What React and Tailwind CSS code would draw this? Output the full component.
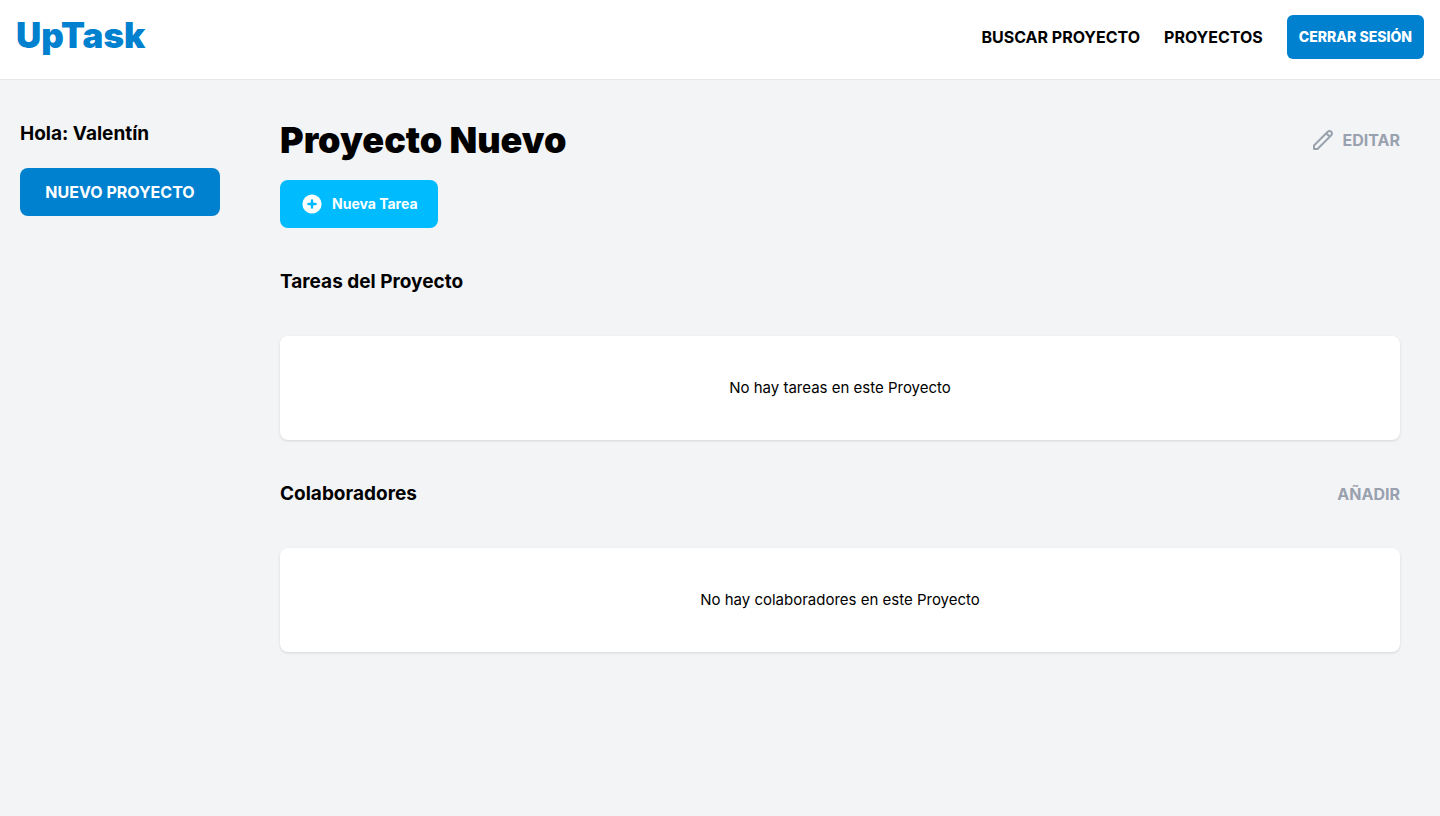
function PencilIcon() {
  return (
    <svg xmlns="http://www.w3.org/2000/svg" className="h-6 w-6" fill="none" viewBox="0 0 24 24" stroke="currentColor" strokeWidth={2} aria-hidden="true">
      <path strokeLinecap="round" strokeLinejoin="round" d="M15.232 5.232l3.536 3.536m-2.036-5.036a2.5 2.5 0 113.536 3.536L6.5 21.036H3v-3.572L16.732 3.732z" />
    </svg>
  );
}

function PlusIcon() {
  return (
    <svg xmlns="http://www.w3.org/2000/svg" className="h-6 w-6" viewBox="0 0 20 20" fill="currentColor" aria-hidden="true">
      <path fillRule="evenodd" clipRule="evenodd" d="M10 18a8 8 0 100-16 8 8 0 000 16zm1-11a1 1 0 10-2 0v2H7a1 1 0 100 2h2v2a1 1 0 102 0v-2h2a1 1 0 100-2h-2V7z" />
    </svg>
  );
}

function Header() {
  return (
    <header className="border-b border-gray-200 bg-white px-4 pt-[15px] pb-5">
      <div className="flex items-start justify-between">
        <h2 className="text-[35px] leading-10 font-black text-[#0081cf]">UpTask</h2>
        <nav className="flex items-center gap-6">
          <button type="button" className="font-bold uppercase">Buscar Proyecto</button>
          <a href="#proyectos" className="font-bold uppercase">Proyectos</a>
          <button type="button" className="rounded-md bg-[#0081cf] p-3 text-sm font-extrabold text-white uppercase">Cerrar Sesión</button>
        </nav>
      </div>
    </header>
  );
}

function Sidebar() {
  return (
    <aside className="w-60 shrink-0 px-5 py-10">
      <p className="text-[19px] leading-7 font-bold">Hola: Valentín</p>
      <a href="#crear-proyecto" className="mt-5 block w-full rounded-lg bg-[#0081cf] p-3 text-center font-bold text-white uppercase">Nuevo Proyecto</a>
    </aside>
  );
}

function EmptyCard({ children }) {
  return (
    <div className="mt-10 rounded-lg bg-white shadow">
      <p className="p-10 text-center text-[15px] leading-6">{children}</p>
    </div>
  );
}

export default function App() {
  return (
    <div className="min-h-screen bg-gray-100 font-['Inter',sans-serif] text-black">
      <Header />
      <div className="flex">
        <Sidebar />
        <main className="min-w-0 flex-1 p-10">
          <div className="flex items-center justify-between">
            <h1 className="text-4xl font-black">Proyecto Nuevo</h1>
            <a href="#editar" className="flex items-center gap-2 font-bold text-gray-400 uppercase">
              <PencilIcon />
              Editar
            </a>
          </div>
          <button type="button" className="mt-5 flex items-center gap-2 rounded-lg bg-sky-400 px-5 py-3 text-sm font-bold text-white">
            <PlusIcon />
            Nueva Tarea
          </button>
          <p className="mt-10 text-[19px] leading-7 font-bold">Tareas del Proyecto</p>
          <EmptyCard>No hay tareas en este Proyecto</EmptyCard>
          <div className="mt-10 flex items-center justify-between">
            <p className="text-[19px] leading-7 font-bold">Colaboradores</p>
            <a href="#colaboradores" className="font-bold text-gray-400 uppercase">Añadir</a>
          </div>
          <EmptyCard>No hay colaboradores en este Proyecto</EmptyCard>
        </main>
      </div>
    </div>
  );
}
